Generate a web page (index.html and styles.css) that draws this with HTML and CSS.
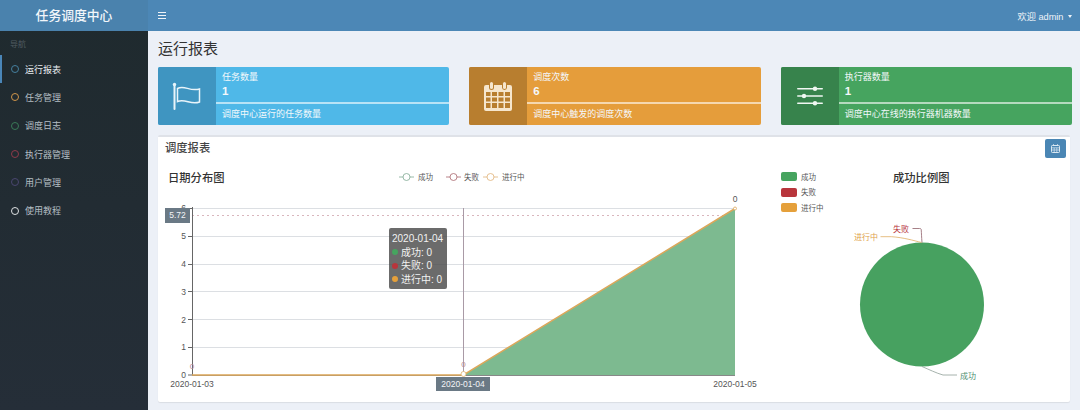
FILE: index.html
```html
<!DOCTYPE html>
<html lang="en">

<head>
    <meta charset="UTF-8">
    <meta name="viewport" content="width=device-width, initial-scale=1.0">
    <title>任务调度中心</title>
    <link rel="stylesheet" href="styles.css">
</head>

<body>

    <!-- Sidebar -->
    <aside class="sidebar">
        <div class="logo">任务调度中心</div>
        <div class="nav-head">导航</div>
        <ul class="menu">
            <li class="menu-item active"><i class="ring ring-blue"></i>运行报表</li>
            <li class="menu-item"><i class="ring ring-orange"></i>任务管理</li>
            <li class="menu-item"><i class="ring ring-green"></i>调度日志</li>
            <li class="menu-item"><i class="ring ring-red"></i>执行器管理</li>
            <li class="menu-item"><i class="ring ring-purple"></i>用户管理</li>
            <li class="menu-item"><i class="ring ring-white"></i>使用教程</li>
        </ul>
    </aside>

    <div class="main">
        <!-- Top bar -->
        <header class="topbar">
            <div class="burger"><span></span><span></span><span></span></div>
            <div class="user">欢迎 admin <i class="caret"></i></div>
        </header>

        <section class="content">
            <h1>运行报表</h1>

            <!-- Info boxes -->
            <div class="info-row">
                <div class="info-box bg-blue">
                    <div class="info-icon">
                        <svg width="30" height="28" viewBox="0 0 30 28" fill="none" stroke="#e8f4fa" stroke-width="1.500">
                            <path d="M2.500 3v24" stroke-width="2" stroke-linecap="round"/>
                            <circle cx="2.500" cy="2.500" r="1.700" fill="#e8f4fa" stroke="none"/>
                            <path d="M5.500 6.500c7-4 12 3.500 22 .5v13c-9 3.500-14-4-22-.5z"/>
                        </svg>
                    </div>
                    <div class="info-text">
                        <div class="info-top">
                            <div class="info-label">任务数量</div>
                            <div class="info-num">1</div>
                        </div>
                        <div class="info-desc">调度中心运行的任务数量</div>
                    </div>
                </div>
                <div class="info-box bg-orange">
                    <div class="info-icon">
                        <svg width="28" height="30" viewBox="0 0 28 30" fill="#f6e6cd">
                            <path fill-rule="evenodd" d="M2 4h3v2.500a2.500 2.500 0 0 0 5 0V4h8v2.500a2.500 2.500 0 0 0 5 0V4h3a2 2 0 0 1 2 2v22a2 2 0 0 1-2 2H2a2 2 0 0 1-2-2V6a2 2 0 0 1 2-2zM2 11v4h4.500v-4zm6 0v4h5v-4zm6.500 0v4h5v-4zm6.500 0v4h5v-4zM2 16.500v4h4.500v-4zm6 0v4h5v-4zm6.500 0v4h5v-4zm6.500 0v4h5v-4zM2 22v5h4.500v-5zm6 0v5h5v-5zm6.500 0v5h5v-5zm6.500 0v5h5v-5z"/>
                            <rect x="6" y="1" width="3" height="7" rx="1.500"/>
                            <rect x="19" y="1" width="3" height="7" rx="1.500"/>
                        </svg>
                    </div>
                    <div class="info-text">
                        <div class="info-top">
                            <div class="info-label">调度次数</div>
                            <div class="info-num">6</div>
                        </div>
                        <div class="info-desc">调度中心触发的调度次数</div>
                    </div>
                </div>
                <div class="info-box bg-green">
                    <div class="info-icon">
                        <svg width="28" height="22" viewBox="0 0 28 22" fill="#f0f7f2">
                            <rect x="1" y="3" width="26" height="1.600" rx=".8"/>
                            <rect x="1" y="10.200" width="26" height="1.600" rx=".8"/>
                            <rect x="1" y="17.500" width="26" height="1.600" rx=".8"/>
                            <circle cx="19" cy="3.800" r="2.200"/>
                            <circle cx="8" cy="11" r="2.200"/>
                            <circle cx="19" cy="18.300" r="2.200"/>
                        </svg>
                    </div>
                    <div class="info-text">
                        <div class="info-top">
                            <div class="info-label">执行器数量</div>
                            <div class="info-num">1</div>
                        </div>
                        <div class="info-desc">调度中心在线的执行器机器数量</div>
                    </div>
                </div>
            </div>

            <!-- Report card -->
            <div class="card">
                <div class="card-head">
                    <h2>调度报表</h2>
                    <button class="date-btn">
                        <svg width="9" height="9" viewBox="0 0 9 9" fill="none" stroke="#dbe8f2">
                            <rect x=".5" y="1.500" width="8" height="7" rx=".8"/>
                            <path d="M.5 3.800h8M2.500 0v2M6.500 0v2M.5 6h8M3.200 3.800v4.500M5.800 3.800v4.500" stroke-width=".7"/>
                        </svg>
                    </button>
                </div>
                <div class="charts">
                    <!-- Line chart -->
                    <div class="chart-left">
                        <svg class="chart-svg" width="610" height="245" viewBox="158 160 610 245">
                            <text class="chart-title" x="168" y="182">日期分布图</text>

                            <g fill="none" stroke-width=".8">
                                <path d="M399 177h15" stroke="#7fa892"/>
                                <circle cx="406.500" cy="177" r="3.500" stroke="#7fa892" fill="#fff"/>
                                <path d="M446 177h15" stroke="#a8666c"/>
                                <circle cx="453.500" cy="177" r="3.500" stroke="#a8666c" fill="#fff"/>
                                <path d="M483 177h15" stroke="#e0b278"/>
                                <circle cx="490.500" cy="177" r="3.500" stroke="#e0b278" fill="#fff"/>
                            </g>
                            <text class="legend-text" x="418" y="179.500">成功</text>
                            <text class="legend-text" x="464" y="179.500">失败</text>
                            <text class="legend-text" x="502" y="179.500">进行中</text>

                            <g stroke="#dcdfe3" stroke-width="1">
                                <path d="M192 208.500h543M192 236.500h543M192 264.500h543M192 291.500h543M192 319.500h543M192 347.500h543"/>
                            </g>
                            <path d="M192 215.500h543" stroke="#d9b6bd" stroke-width="1" stroke-dasharray="2 3"/>

                            <path d="M463.500 375L735 208.500V375z" fill="#7dba90"/>
                            <path d="M463.500 208v167" stroke="#a99aa6" stroke-width="1"/>
                            <path d="M192.500 207v168M188 208.500h4M188 236.500h4M188 264.500h4M188 291.500h4M188 319.500h4M188 347.500h4M188 375h4" stroke="#666" stroke-width="1" fill="none"/>
                            <path d="M192 375.500h543" stroke="#888" stroke-width="1"/>
                            <path d="M192 375h271.500L735 208.500" fill="none" stroke="#dca75a" stroke-width="1.500"/>
                            <circle cx="463.500" cy="374" r="2.500" fill="#fff" stroke="#e0b36c" stroke-width=".8"/>
                            <circle cx="735" cy="208.500" r="1.500" fill="#fff" stroke="#dca75a" stroke-width=".8"/>

                            <g class="tick">
                                <text x="186" y="211" text-anchor="end">6</text>
                                <text x="186" y="239" text-anchor="end">5</text>
                                <text x="186" y="267" text-anchor="end">4</text>
                                <text x="186" y="294.500" text-anchor="end">3</text>
                                <text x="186" y="322.500" text-anchor="end">2</text>
                                <text x="186" y="350" text-anchor="end">1</text>
                                <text x="186" y="378" text-anchor="end">0</text>
                                <text x="192" y="387" text-anchor="middle">2020-01-03</text>
                                <text x="735" y="387" text-anchor="middle">2020-01-05</text>
                                <text x="735" y="202" text-anchor="middle">0</text>
                            </g>
                            <text class="tick-red" x="192" y="369" text-anchor="middle">0</text>
                            <text class="tick-red" x="463.500" y="367" text-anchor="middle">0</text>
                        </svg>
                        <div class="pointer-y">5.72</div>
                        <div class="pointer-x">2020-01-04</div>
                        <div class="tooltip">
                            <div>2020-01-04</div>
                            <div class="tip-row"><i class="dot dot-green"></i>成功: 0</div>
                            <div class="tip-row"><i class="dot dot-red"></i>失败: 0</div>
                            <div class="tip-row"><i class="dot dot-orange"></i>进行中: 0</div>
                        </div>
                    </div>

                    <!-- Pie chart -->
                    <svg class="chart-svg" width="302" height="245" viewBox="768 160 302 245">
                        <rect x="781" y="172" width="16" height="9" rx="2" fill="#46a45f"/>
                        <rect x="781" y="188" width="16" height="9" rx="2" fill="#b8353c"/>
                        <rect x="781" y="203" width="16" height="9" rx="2" fill="#e5a03b"/>
                        <text class="legend-text" x="801" y="179.500">成功</text>
                        <text class="legend-text" x="801" y="195">失败</text>
                        <text class="legend-text" x="801" y="210.500">进行中</text>

                        <text class="chart-title" x="893" y="182">成功比例图</text>

                        <circle cx="922" cy="304.500" r="62" fill="#47a160"/>
                        <path d="M922 242.500c-.5-6-.5-9-.8-13-.1-.8-.6-1-1.700-1h-7" fill="none" stroke="#8f5f68" stroke-width=".8"/>
                        <path d="M921.500 242.500c-8-2-18-5-30-5.800h-11" fill="none" stroke="#e0ad63" stroke-width=".8"/>
                        <path d="M922 366.500c7 3 14 6.500 21 8.500h14" fill="none" stroke="#8f9f98" stroke-width=".8"/>
                        <text class="pie-label pie-red" x="893" y="232">失败</text>
                        <text class="pie-label pie-orange" x="854" y="240">进行中</text>
                        <text class="pie-label pie-green" x="960" y="379">成功</text>
                    </svg>
                </div>
            </div>
        </section>
    </div>

</body>

</html>
```

FILE: styles.css
```css
* {
    box-sizing: border-box;
}

body {
    font-family: 'Liberation Sans', 'Noto Sans CJK SC', sans-serif;
    background-color: #ecf0f7;
    margin: 0;
    height: 410px;
    overflow: hidden;
    display: flex;
    color: #333;
}

/* Sidebar */
.sidebar {
    width: 148px;
    flex-shrink: 0;
    background: linear-gradient(#1f2a2e, #252e38);
}

.logo {
    height: 31px;
    background-color: #4a82ad;
    color: #f2f6fa;
    font-size: 12.800px;
    font-weight: 500;
    line-height: 31px;
    text-align: center;
}

.nav-head {
    color: #4f5a60;
    font-size: 8px;
    padding: 7px 0 0 10px;
    height: 24px;
}

.menu {
    list-style: none;
    margin: 0;
    padding: 0;
}

.menu-item {
    height: 28.300px;
    display: flex;
    align-items: center;
    gap: 6px;
    padding-left: 11px;
    color: #b5bfc4;
    font-size: 9px;
}

.menu-item.active {
    color: #e8ecef;
    box-shadow: inset 2px 0 0 #4a86b8;
}

.ring {
    width: 8px;
    height: 8px;
    border-radius: 50%;
    border: 1.500px solid #fff;
}

.ring-blue { border-color: #45809f; }
.ring-orange { border-color: #d0954a; }
.ring-green { border-color: #3a7a58; }
.ring-red { border-color: #8f3a4a; }
.ring-purple { border-color: #4a4670; }
.ring-white { border-color: #dfe2e4; }

/* Top bar */
.main {
    flex: 1;
    min-width: 0;
}

.topbar {
    height: 31px;
    background-color: #4c87b6;
    display: flex;
    justify-content: space-between;
    align-items: center;
    padding: 0 8px 0 10px;
    color: #eef3f8;
}

.burger {
    display: flex;
    flex-direction: column;
    gap: 1.500px;
    width: 8px;
}

.burger span {
    height: 1.500px;
    background-color: #f0f4f8;
}

.user {
    font-size: 9.200px;
}

.caret {
    display: inline-block;
    margin-left: 2px;
    vertical-align: 2px;
    border-top: 3px solid #eef3f8;
    border-left: 2.500px solid transparent;
    border-right: 2.500px solid transparent;
}

/* Content */
.content {
    padding: 0 10px;
}

h1 {
    font-size: 15px;
    font-weight: normal;
    color: #333;
    margin: 0;
    line-height: 20px;
    padding: 8px 0 8px;
}

.info-row {
    display: flex;
    gap: 20px;
    margin-right: -2px;
}

.info-box {
    flex: 1;
    height: 58px;
    display: flex;
    border-radius: 2px;
    overflow: hidden;
    color: #f4f8fb;
}

.bg-blue { background-color: #4fb8e8; }
.bg-orange { background-color: #e59d3b; }
.bg-green { background-color: #46a45f; }

.bg-blue .info-icon { background-color: #3f95c1; }
.bg-orange .info-icon { background-color: #b87e2f; }
.bg-green .info-icon { background-color: #37834c; }

.info-icon {
    width: 58px;
    flex-shrink: 0;
    display: flex;
    align-items: center;
    justify-content: center;
}

.info-text {
    flex: 1;
    min-width: 0;
}

.info-top {
    height: 37px;
    padding: 4px 0 0 6px;
    border-bottom: 2px solid rgba(255, 255, 255, 0.6);
}

.info-label {
    font-size: 9px;
    line-height: 12px;
}

.info-num {
    font-size: 11.500px;
    font-weight: bold;
    line-height: 16px;
}

.info-desc {
    font-size: 9px;
    line-height: 21px;
    padding-left: 6px;
}

/* Report card */
.card {
    margin-top: 10px;
    height: 267px;
    background-color: #fff;
    border-top: 2px solid #dfe2e8;
    border-radius: 2px;
    box-shadow: 0 1px 1px rgba(0, 0, 0, 0.08);
}

.card-head {
    height: 23px;
    padding: 0 4px 0 7px;
    display: flex;
    justify-content: space-between;
    align-items: flex-start;
}

h2 {
    font-size: 11.300px;
    font-weight: 500;
    color: #444;
    margin: 0;
    line-height: 22px;
}

.date-btn {
    width: 21px;
    height: 19px;
    margin-top: 2px;
    background-color: #4a86b4;
    border: none;
    border-radius: 2px;
    padding: 0;
    display: flex;
    align-items: center;
    justify-content: center;
}

.charts {
    display: flex;
}

.chart-left {
    position: relative;
}

.chart-svg {
    display: block;
}

.chart-title {
    font-size: 11.300px;
    font-weight: 500;
    fill: #333;
}

.legend-text {
    font-size: 7.500px;
    fill: #555;
}

.tick text {
    font-size: 8.500px;
    fill: #555;
}

.tick-red {
    font-size: 8px;
    fill: #b98a92;
}

.pie-label {
    font-size: 8px;
}

.pie-red { fill: #b8353c; }
.pie-orange { fill: #e0a24a; }
.pie-green { fill: #4f8f72; }

/* Axis pointers and tooltip sit over the chart */
.pointer-y,
.pointer-x {
    position: absolute;
    background-color: #6a7985;
    color: #f2f4f6;
    font-size: 8.500px;
    line-height: 14px;
    text-align: center;
}

.pointer-y {
    left: 7px;
    top: 48px;
    width: 25px;
    height: 15px;
}

.pointer-x {
    left: 278px;
    top: 217px;
    width: 54px;
}

.tooltip {
    position: absolute;
    left: 231px;
    top: 68px;
    width: 58px;
    height: 61px;
    padding: 4px 3px;
    background-color: rgba(70, 70, 70, 0.8);
    border-radius: 2px;
    color: #f2f2f2;
    font-size: 10px;
    line-height: 13.500px;
}

.tip-row {
    display: flex;
    align-items: center;
    gap: 3px;
}

.dot {
    width: 6px;
    height: 6px;
    border-radius: 50%;
}

.dot-green { background-color: #46a45f; }
.dot-red { background-color: #b8353c; }
.dot-orange { background-color: #e5a03b; }
```
